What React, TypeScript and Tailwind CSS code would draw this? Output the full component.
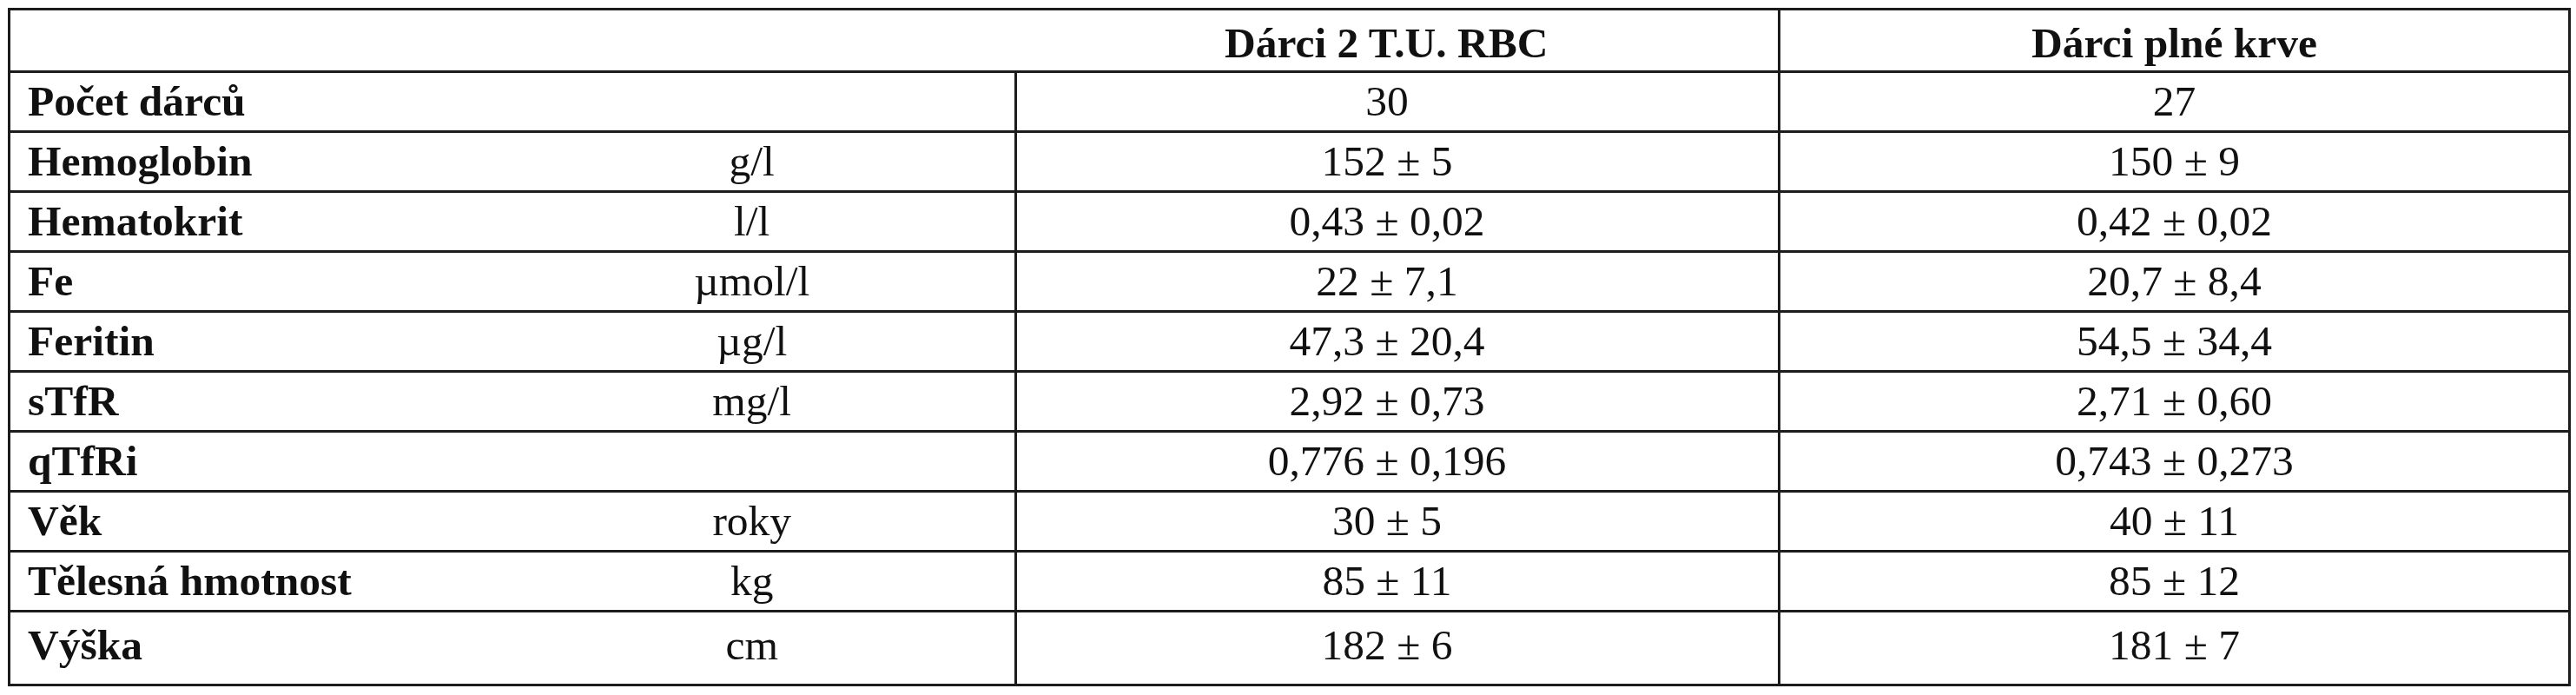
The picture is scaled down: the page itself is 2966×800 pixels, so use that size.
import React from "react";

type Row = [string, string, string, string];

const rows: Row[] = [
  ["Počet dárců", "", "30", "27"],
  ["Hemoglobin", "g/l", "152 ± 5", "150 ± 9"],
  ["Hematokrit", "l/l", "0,43 ± 0,02", "0,42 ± 0,02"],
  ["Fe", "µmol/l", "22 ± 7,1", "20,7 ± 8,4"],
  ["Feritin", "µg/l", "47,3 ± 20,4", "54,5 ± 34,4"],
  ["sTfR", "mg/l", "2,92 ± 0,73", "2,71 ± 0,60"],
  ["qTfRi", "", "0,776 ± 0,196", "0,743 ± 0,273"],
  ["Věk", "roky", "30 ± 5", "40 ± 11"],
  ["Tělesná hmotnost", "kg", "85 ± 11", "85 ± 12"],
  ["Výška", "cm", "182 ± 6", "181 ± 7"],
];

export default function App() {
  return (
    <div className="min-h-[800px] bg-white pl-[9px] pt-[9px] font-['Liberation_Serif',serif] text-[49.5px] leading-[1.15] text-[#111]">
      <table className="w-[2948px] table-fixed border-collapse border-[3px] border-[#1c1c1c]">
        <colgroup>
          <col className="w-[553px]" />
          <col className="w-[606px]" />
          <col className="w-[879px]" />
          <col className="w-[910px]" />
        </colgroup>
        <thead>
          <tr className="h-[72px]">
            <th colSpan={2} className="border-b-[3px] border-[#1c1c1c]"></th>
            <th className="border-b-[3px] border-[#1c1c1c] pr-[24px] pt-[8px] text-center font-bold">
              Dárci 2 T.U. RBC
            </th>
            <th className="border-b-[3px] border-l-[3px] border-[#1c1c1c] pt-[8px] text-center font-bold">
              Dárci plné krve
            </th>
          </tr>
        </thead>
        <tbody>
          {rows.map((r, i) => {
            const last = i === rows.length - 1;
            return (
              <tr key={r[0]} className={last ? "h-[85px]" : "h-[69px]"}>
                <td className={`border-b-[3px] border-[#1c1c1c] pl-[20px] text-left font-bold ${last ? "pb-[6px]" : ""}`}>
                  {r[0]}
                </td>
                <td className={`border-b-[3px] border-[#1c1c1c] text-center ${last ? "pb-[6px]" : ""}`}>{r[1]}</td>
                <td className={`border-b-[3px] border-l-[3px] border-[#1c1c1c] pr-[24px] text-center ${last ? "pb-[6px]" : ""}`}>
                  {r[2]}
                </td>
                <td className={`border-b-[3px] border-l-[3px] border-[#1c1c1c] text-center ${last ? "pb-[6px]" : ""}`}>{r[3]}</td>
              </tr>
            );
          })}
        </tbody>
      </table>
    </div>
  );
}
